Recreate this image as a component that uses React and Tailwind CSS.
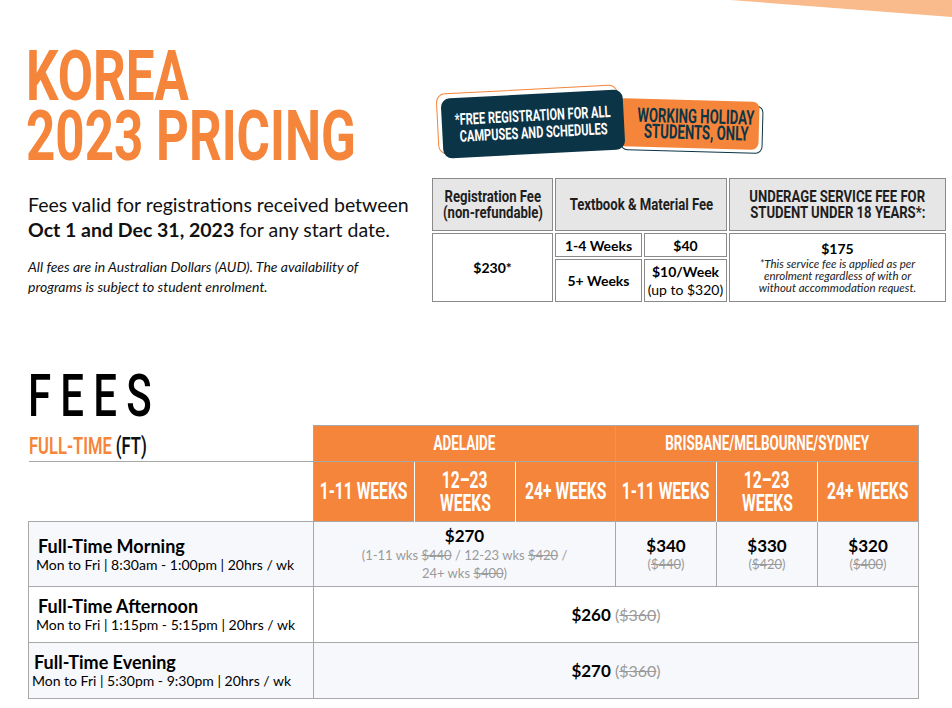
const COND = "font-['Roboto',sans-serif]";
const BODY = "font-['Lato','Open_Sans',sans-serif]";
const ORANGE = 'bg-[#f5853a]';

function Strike({ children }) {
  return <span className="line-through">{children}</span>;
}

// No condensed face is installed, so the print's narrow headline type is faked by squeezing Roboto.
function Squeeze({ children, className = 'scale-x-[0.68]' }) {
  return <span className={`inline-block origin-center whitespace-nowrap ${className}`}>{children}</span>;
}

function Stack({ children, className = '' }) {
  return <div className={`flex flex-col items-center ${className}`}>{children}</div>;
}

function Badges() {
  return (
    <div className="relative h-[130px]">
      <div className="absolute left-[191px] top-[58px] h-[48px] w-[142px] rotate-[1.5deg] rounded-[7px] border-[1.5px] border-[#0c3447]" />
      <Stack
        className={`absolute left-[187px] top-[54px] h-[48px] w-[142px] rotate-[1.5deg] justify-center rounded-[7px] ${ORANGE} pl-4 text-[20px] font-bold leading-[16px] text-[#0c3447] ${COND}`}
      >
        <Squeeze className="scale-x-[0.66]">WORKING HOLIDAY</Squeeze>
        <Squeeze className="scale-x-[0.66]">STUDENTS, ONLY</Squeeze>
      </Stack>
      <div className="absolute left-[7px] top-[43px] h-[61px] w-[182px] -rotate-[3deg] rounded-[9px] border border-[#f5853a]" />
      <Stack
        className={`absolute left-[12px] top-[48px] h-[60px] w-[182px] -rotate-[3deg] justify-center rounded-[9px] bg-[#0c3447] text-[16px] font-bold leading-[17px] text-white ${COND}`}
      >
        <Squeeze className="scale-x-[0.69]">*FREE REGISTRATION FOR ALL</Squeeze>
        <Squeeze className="scale-x-[0.69]">CAMPUSES AND SCHEDULES</Squeeze>
      </Stack>
    </div>
  );
}

function FeeTable() {
  const head = `border border-[#8a8a8a] bg-[#e6e6e6] text-[16px] font-bold leading-[16px] text-[#1e1e1e] ${COND}`;
  const cell = `border border-[#8a8a8a] bg-white text-center text-[14px] text-black ${BODY}`;
  return (
    <table className="w-[518px] table-fixed border-separate border-spacing-[2px]">
      <colgroup>
        <col className="w-[121px]" />
        <col className="w-[87px]" />
        <col className="w-[83px]" />
        <col className="w-[217px]" />
      </colgroup>
      <thead>
        <tr className="h-[53px]">
          <th className={head}>
            <Stack>
              <Squeeze className="scale-x-[0.82]">Registration Fee</Squeeze>
              <Squeeze className="scale-x-[0.82]">(non-refundable)</Squeeze>
            </Stack>
          </th>
          <th colSpan={2} className={head}>
            <Stack>
              <Squeeze className="scale-x-[0.82]">Textbook &amp; Material Fee</Squeeze>
            </Stack>
          </th>
          <th className={head}>
            <Stack>
              <Squeeze className="scale-x-[0.82]">UNDERAGE SERVICE FEE FOR</Squeeze>
              <Squeeze className="scale-x-[0.82]">STUDENT UNDER 18 YEARS*:</Squeeze>
            </Stack>
          </th>
        </tr>
      </thead>
      <tbody>
        <tr className="h-[24px]">
          <td rowSpan={2} className={`${cell} font-bold`}>
            $230*
          </td>
          <td className={`${cell} font-bold`}>1-4 Weeks</td>
          <td className={`${cell} font-bold`}>$40</td>
          <td rowSpan={2} className={`${cell} leading-none`}>
            <div className="text-[14px] font-bold">$175</div>
            <div className="mx-auto mt-[2px] w-[172px] text-[11.5px] italic leading-[12px] text-[#222]">
              *This service fee is applied as per enrolment regardless of with or without accommodation request.
            </div>
          </td>
        </tr>
        <tr className="h-[43px]">
          <td className={`${cell} font-bold`}>5+ Weeks</td>
          <td className={`${cell} leading-[18px]`}>
            <span className="font-bold">$10/Week</span>
            <br />
            <span className="whitespace-nowrap">(up to $320)</span>
          </td>
        </tr>
      </tbody>
    </table>
  );
}

function Schedule({ title, hours, shade, indent = 'pl-[9px]' }) {
  return (
    <td className={`border border-[#a8a8a8] ${shade} ${indent} align-middle ${BODY}`}>
      <div className="text-[18px] font-bold leading-[20px] text-black">{title}</div>
      <div className="-ml-[2px] text-[14px] leading-[17px] text-black">{hours}</div>
    </td>
  );
}

function Price({ now, was, shade }) {
  return (
    <td className={`border border-[#a8a8a8] ${shade} text-center align-middle ${BODY}`}>
      <div className="text-[17px] font-bold leading-[20px] text-black">{now}</div>
      <div className="text-[13px] leading-[17px] text-[#9a9a9a]">
        (<Strike>{was}</Strike>)
      </div>
    </td>
  );
}

function WeekCell({ label, lines, edge = '' }) {
  return (
    <th className={`${ORANGE} border-l border-white align-middle text-[23px] font-bold leading-[23px] text-white ${COND} ${edge}`}>
      <Stack>
        {(lines || [label]).map((t) => (
          <Squeeze key={t}>{t}</Squeeze>
        ))}
      </Stack>
    </th>
  );
}

function Fees() {
  const group = `${ORANGE} border border-[#a8a8a8] text-[21px] font-bold text-white ${COND}`;
  const light = 'bg-[#f7f8fc]';
  const was = 'text-[16px] text-[#9a9a9a]';
  return (
    <section className="pl-[28px] pt-[63px]">
      <h2 className={`h-[58px] text-[60px] font-medium leading-[58px] tracking-[0.22em] text-black ${COND}`}>
        <span className="inline-block origin-left scale-x-[0.7]">FEES</span>
      </h2>
      <table className="w-[890px] table-fixed border-collapse">
        <colgroup>
          <col className="w-[285px]" />
          <col className="w-[101px]" />
          <col className="w-[101px]" />
          <col className="w-[100px]" />
          <col className="w-[101px]" />
          <col className="w-[101px]" />
          <col className="w-[101px]" />
        </colgroup>
        <thead>
          <tr className="h-[36px]">
            <th className={`border-b border-[#a8a8a8] pb-[2px] text-left align-bottom text-[23px] font-semibold leading-[24px] ${COND}`}>
              <span className="inline-block origin-left scale-x-[0.72] whitespace-nowrap">
                <span className="text-[#f5853a]">FULL-TIME</span> <span className="text-[#111]">(FT)</span>
              </span>
            </th>
            <th colSpan={3} className={group}>
              <Stack>
                <Squeeze className="scale-x-[0.64]">ADELAIDE</Squeeze>
              </Stack>
            </th>
            <th colSpan={3} className={group}>
              <Stack>
                <Squeeze className="scale-x-[0.64]">BRISBANE/MELBOURNE/SYDNEY</Squeeze>
              </Stack>
            </th>
          </tr>
          <tr className="h-[60px]">
            <th />
            <WeekCell label="1-11 WEEKS" edge="border-l-[#a8a8a8]" />
            <WeekCell lines={['12–23', 'WEEKS']} />
            <WeekCell label="24+ WEEKS" />
            <WeekCell label="1-11 WEEKS" edge="border-l-[#a8a8a8]" />
            <WeekCell lines={['12–23', 'WEEKS']} />
            <WeekCell label="24+ WEEKS" edge="border-r border-r-[#a8a8a8]" />
          </tr>
        </thead>
        <tbody>
          <tr className="h-[65px]">
            <Schedule title="Full-Time Morning" hours="Mon to Fri | 8:30am - 1:00pm | 20hrs / wk" shade={light} />
            <td colSpan={3} className={`border border-[#a8a8a8] ${light} px-6 text-center align-middle ${BODY}`}>
              <div className="text-[17px] font-bold leading-[20px] text-black">$270</div>
              <div className="text-[13px] leading-[18px] text-[#9a9a9a]">
                (1-11 wks <Strike>$440</Strike> / 12-23 wks <Strike>$420</Strike> /
                <br />
                24+ wks <Strike>$400</Strike>)
              </div>
            </td>
            <Price now="$340" was="$440" shade={light} />
            <Price now="$330" was="$420" shade={light} />
            <Price now="$320" was="$400" shade={light} />
          </tr>
          <tr className="h-[56px]">
            <Schedule title="Full-Time Afternoon" hours="Mon to Fri | 1:15pm - 5:15pm | 20hrs / wk" shade="bg-white" />
            <td colSpan={6} className={`border border-[#a8a8a8] bg-white text-center align-middle ${BODY}`}>
              <span className="text-[17px] font-bold text-black">$260</span>{' '}
              <span className={was}>
                (<Strike>$360</Strike>)
              </span>
            </td>
          </tr>
          <tr className="h-[56px]">
            <Schedule
              title="Full-Time Evening"
              hours="Mon to Fri | 5:30pm - 9:30pm | 20hrs / wk"
              shade={light}
              indent="pl-[5px]"
            />
            <td colSpan={6} className={`border border-[#a8a8a8] ${light} text-center align-middle ${BODY}`}>
              <span className="text-[17px] font-bold text-black">$270</span>{' '}
              <span className={was}>
                (<Strike>$360</Strike>)
              </span>
            </td>
          </tr>
        </tbody>
      </table>
    </section>
  );
}

export default function App() {
  return (
    <div className="relative h-[708px] w-[952px] overflow-hidden bg-white">
      <svg className="absolute right-0 top-0" width="222" height="17" viewBox="0 0 222 17">
        <polygon points="0,0 222,0 222,17" fill="#f9bb8b" />
      </svg>

      <div className="flex pl-[26px] pt-[46px]">
        <div className="w-[404px]">
          <h1 className={`text-[70px] font-bold leading-[60px] text-[#f5853a] ${COND}`}>
            <span className="inline-block origin-left scale-x-[0.73] whitespace-nowrap">KOREA</span>
            <br />
            <span className="inline-block origin-left scale-x-[0.73] whitespace-nowrap">2023 PRICING</span>
          </h1>
          <p className={`mt-[26px] pl-[2px] text-[19.5px] leading-[25px] text-[#111] ${BODY}`}>
            Fees valid for registrations received between <b>Oct 1 and Dec 31, 2023</b> for any start date.
          </p>
          <p className={`mt-[15px] w-[370px] pl-[2px] text-[14px] italic leading-[20px] text-[#111] ${BODY}`}>
            All fees are in Australian Dollars (AUD). The availability of programs is subject to student enrolment.
          </p>
        </div>
        <div className="w-[518px]">
          <Badges />
          <FeeTable />
        </div>
      </div>

      <Fees />
    </div>
  );
}
